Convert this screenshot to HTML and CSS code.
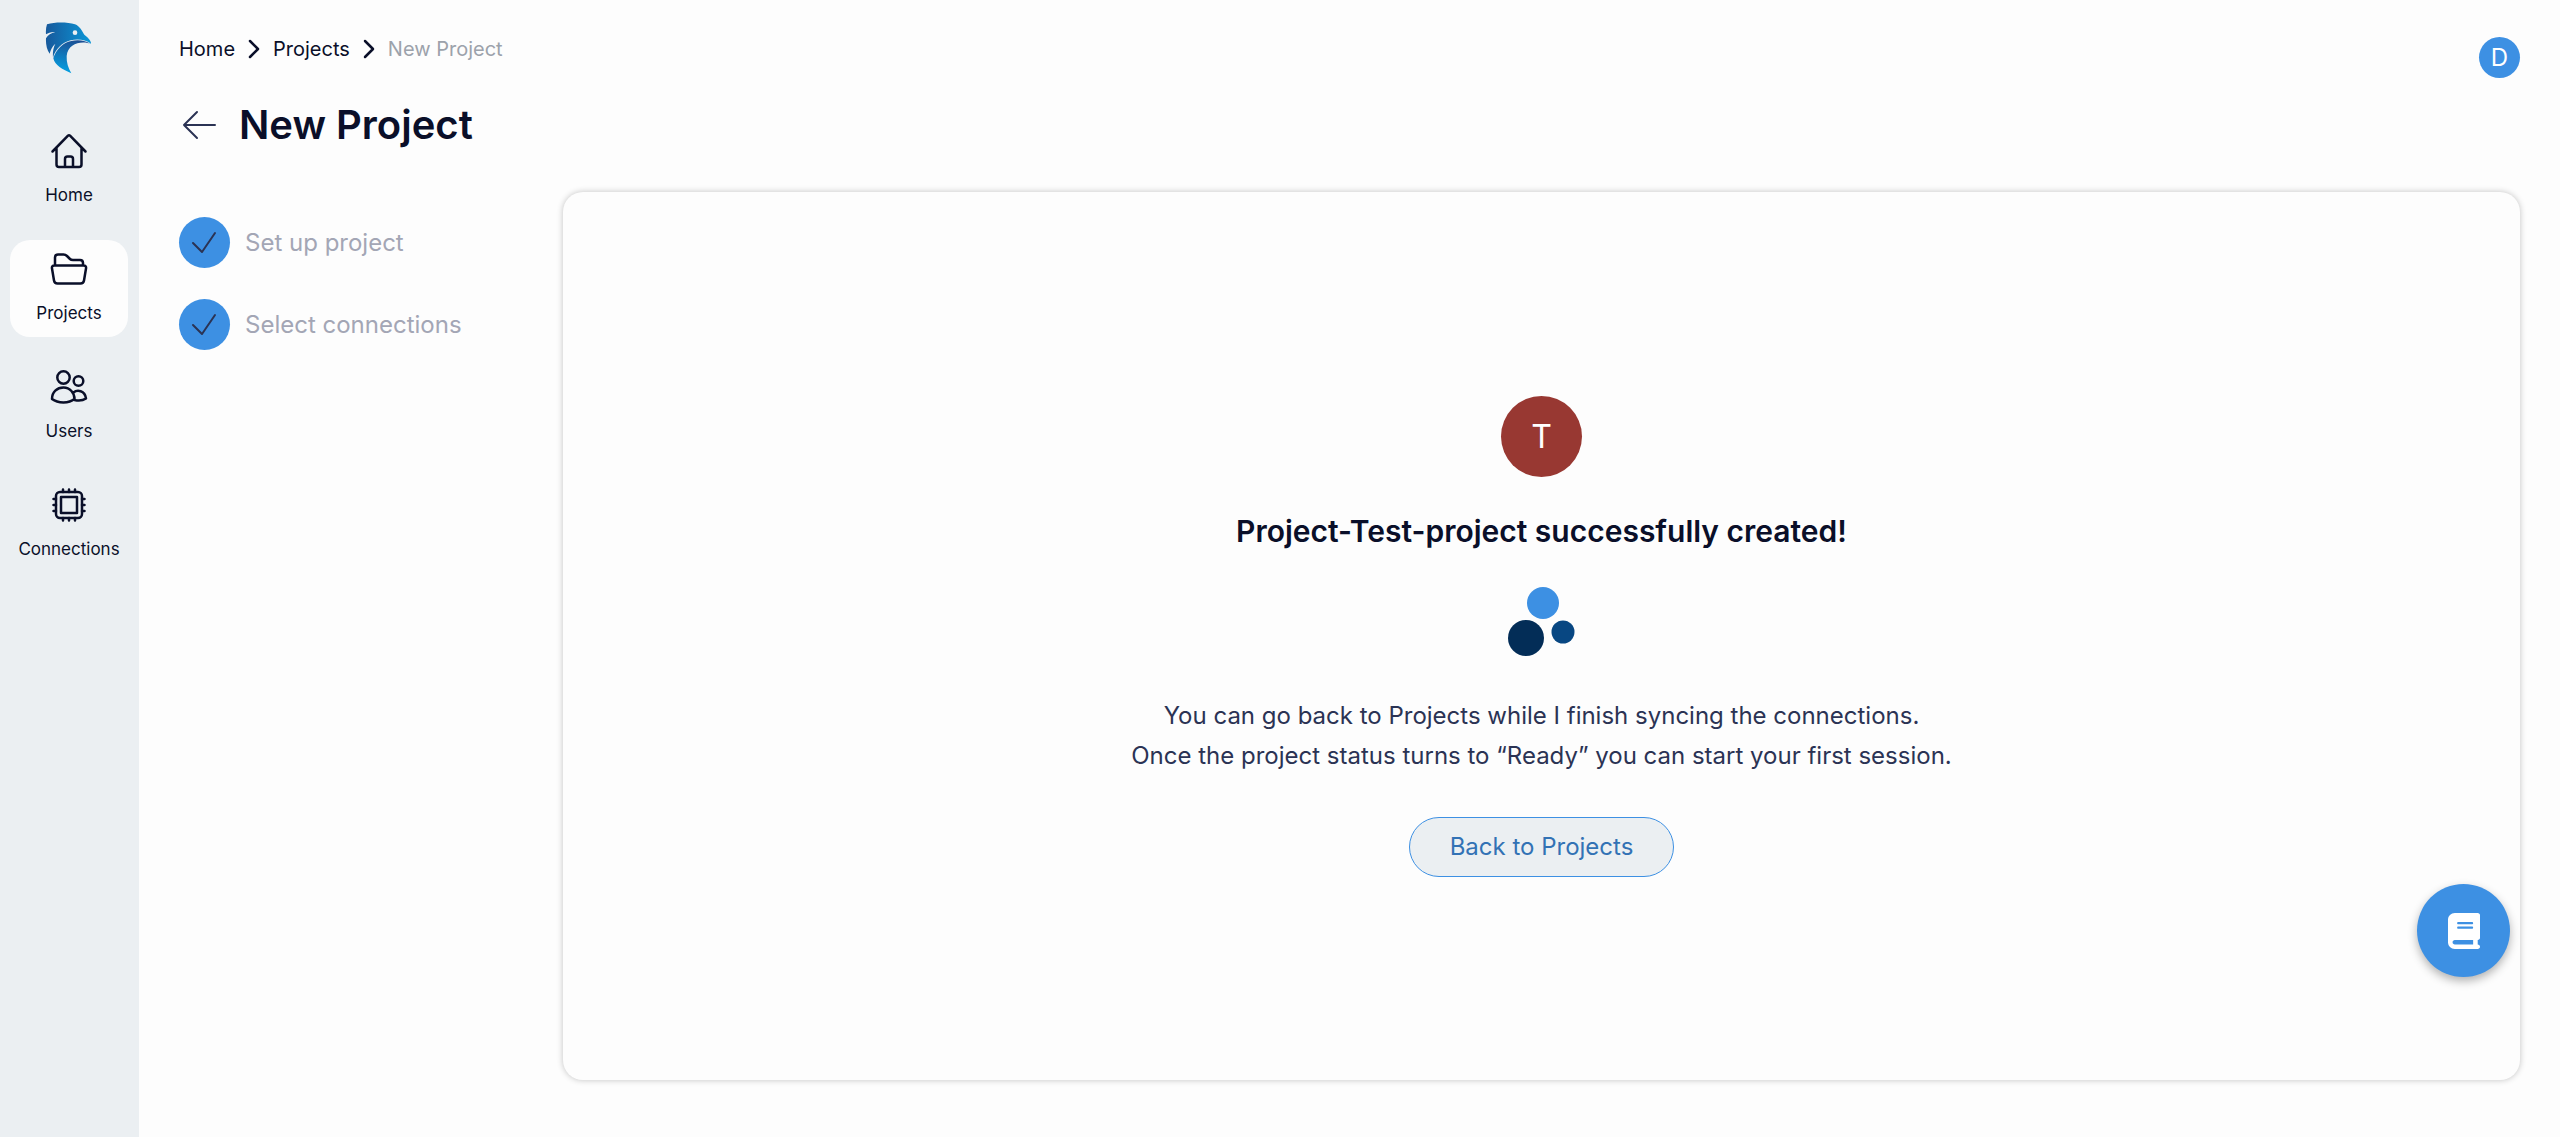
FILE: index.html
```html
<!DOCTYPE html>
<html lang="en">
<head>
    <meta charset="UTF-8">
    <meta name="viewport" content="width=device-width, initial-scale=1">
    <title>New Project</title>
    <link rel="stylesheet" href="styles.css">
</head>
<body>
<div class="app">
    <nav class="sidebar">
        <a class="logo" href="#" aria-label="Dashboard">
            <svg width="48" height="52" viewBox="48 38 144 156">
                <defs>
                    <linearGradient id="head" x1="0" y1="0" x2="1" y2="0">
                        <stop offset="0" stop-color="#17599c"/>
                        <stop offset="1" stop-color="#0a97d8"/>
                    </linearGradient>
                    <linearGradient id="neck" x1="0.6" y1="0" x2="0.4" y2="1">
                        <stop offset="0" stop-color="#1c4f94"/>
                        <stop offset="1" stop-color="#04a0e2"/>
                    </linearGradient>
                </defs>
                <path fill="url(#head)" d="M54 45C80 37 115 38 138 45C153 51 159 65 166 76C176 84 187 94 186 103C170 91 146 88 125 93C101 98 78 121 72 145C71 130 72 118 79 103C69 112 65 122 62 133C53 121 50 103 51 87C57 77 66 71 79 68C67 67 58 70 51 75C50 64 51 54 54 45Z"/>
                <path fill="url(#neck)" d="M73 147C80 121 103 99 127 95C147 90 170 93 186 104C160 93 116 101 113 140C112 160 118 176 127 192C101 181 77 167 73 147Z"/>
                <circle cx="138" cy="70" r="7" fill="#ebeff2"/>
            </svg>
        </a>
        <ul class="menu">
            <li>
                <a class="menu-item" href="#">
                    <svg class="icon" viewBox="0 0 40 40">
                        <path d="M3.5 20.5L19 4.7Q20 3.7 21 4.7L36.5 20.5M7.5 17V33.5Q7.5 36 10 36H30Q32.5 36 32.5 33.5V17M16 36V28Q16 25.500 18.5 25.5H21.5Q24 25.5 24 28V36"/>
                    </svg>
                    <span>Home</span>
                </a>
            </li>
            <li>
                <a class="menu-item active" href="#">
                    <svg class="icon" viewBox="0 0 40 40">
                        <path d="M6 16V8.5Q6 5.5 9 5.5H14.5Q16.5 5.5 18 7L21 10Q22 11 24 11H31Q34 11 34 14V16M5.5 16.5H34.5Q37.5 16.5 37 19.5L35 31.5Q34.5 34.5 31.5 34.5H8.5Q5.5 34.5 5 31.5L3 19.5Q2.5 16.5 5.5 16.5Z"/>
                    </svg>
                    <span>Projects</span>
                </a>
            </li>
            <li>
                <a class="menu-item" href="#">
                    <svg class="icon" viewBox="0 0 40 40">
                        <circle cx="14.5" cy="10.5" r="6.2"/>
                        <circle cx="29.5" cy="14" r="4.8"/>
                        <path d="M3 32C3 25 8 20.5 14.5 20.5S25.5 26 25.5 32C20 36.5 9 36.5 3 32ZM24.5 25.5C28 22.5 36 23 37 31.5C34 33.5 29 33.8 25.5 33"/>
                    </svg>
                    <span>Users</span>
                </a>
            </li>
            <li>
                <a class="menu-item" href="#">
                    <svg class="icon" viewBox="0 0 40 40">
                        <rect x="7" y="7" width="26" height="26" rx="4"/>
                        <rect x="12" y="12" width="16" height="16"/>
                        <path d="M14 7V4.5M20 7V4.5M26 7V4.5M14 33V35.5M20 33V35.5M26 33V35.5M7 14H4.5M7 20H4.5M7 26H4.5M33 14H35.5M33 20H35.5M33 26H35.5"/>
                    </svg>
                    <span>Connections</span>
                </a>
            </li>
        </ul>
    </nav>

    <main class="main">
        <header class="header">
            <div>
                <div class="breadcrumb">
                    <a href="#">Home</a>
                    <svg class="chevron" viewBox="0 0 12 20"><path d="M2 2L10 10L2 18"/></svg>
                    <a href="#">Projects</a>
                    <svg class="chevron" viewBox="0 0 12 20"><path d="M2 2L10 10L2 18"/></svg>
                    <span class="current">New Project</span>
                </div>
                <div class="title">
                    <button class="back" type="button" aria-label="Back">
                        <svg width="40" height="40" viewBox="0 0 40 40"><path d="M36 20H5M18 7L5 20L18 33"/></svg>
                    </button>
                    <h1>New Project</h1>
                </div>
            </div>
            <button class="user" type="button">D</button>
        </header>

        <div class="content">
            <ol class="steps">
                <li class="step">
                    <span class="check"><svg width="50" height="50" viewBox="0 0 50 50"><path d="M14 26L23 35L36 16"/></svg></span>
                    Set up project
                </li>
                <li class="step">
                    <span class="check"><svg width="50" height="50" viewBox="0 0 50 50"><path d="M14 26L23 35L36 16"/></svg></span>
                    Select connections
                </li>
            </ol>

            <section class="card">
                <div class="avatar">T</div>
                <h2>Project-Test-project successfully created!</h2>
                <svg class="loader" width="68" height="70" viewBox="0 0 68 70">
                    <circle cx="35" cy="16" r="16" fill="#3d90e3"/>
                    <circle cx="18" cy="51" r="18" fill="#032d57"/>
                    <circle cx="55" cy="45" r="11.5" fill="#084782"/>
                </svg>
                <p>You can go back to Projects while I finish syncing the connections.<br>Once the project status turns to “Ready” you can start your first session.</p>
                <button class="btn" type="button">Back to Projects</button>
            </section>
        </div>
    </main>

    <button class="docs" type="button" aria-label="Documentation">
        <svg width="32" height="36" viewBox="0 0 448 512" preserveAspectRatio="none">
            <path fill="#fff" d="M96 0C43 0 0 43 0 96V416c0 53 43 96 96 96H416c18 0 32-14 32-32s-14-32-32-32V384c18 0 32-14 32-32V32c0-18-14-32-32-32H96zm0 384H352v64H96c-18 0-32-14-32-32s14-32 32-32zm32-240c0-9 7-16 16-16H336c9 0 16 7 16 16s-7 16-16 16H144c-9 0-16-7-16-16zm16 48H336c9 0 16 7 16 16s-7 16-16 16H144c-9 0-16-7-16-16s7-16 16-16z"/>
        </svg>
    </button>
</div>
</body>
</html>
```
FILE: styles.css
```css
* {
    box-sizing: border-box;
}

body {
    margin: 0;
    font-family: Inter, "Liberation Sans", sans-serif;
    color: #0a0f29;
    background-color: #fdfdfd;
}

h1, h2, p, ul, ol {
    margin: 0;
    padding: 0;
}

ul, ol {
    list-style: none;
}

a {
    color: inherit;
    text-decoration: none;
}

button {
    padding: 0;
    border: none;
    font-family: inherit;
    cursor: pointer;
}

svg {
    display: block;
    fill: none;
    stroke-linecap: round;
    stroke-linejoin: round;
}

.app {
    display: flex;
    min-height: 100vh;
}

/* sidebar */
.sidebar {
    display: flex;
    flex-direction: column;
    align-items: center;
    gap: 48px;
    width: 139px;
    padding: 22px 11px 22px 10px;
    background-color: #ebeff2;
}

.menu {
    display: flex;
    flex-direction: column;
    gap: 21px;
    width: 118px;
}

.menu-item {
    display: flex;
    flex-direction: column;
    align-items: center;
    gap: 14px;
    height: 97px;
    padding-top: 9px;
    border-radius: 20px;
    font-size: 17px;
    line-height: 20px;
}

.menu-item.active {
    background-color: #fdfdfd;
}

.icon {
    width: 40px;
    height: 40px;
    stroke: #0a0f29;
    stroke-width: 2.5;
}

/* page header */
.main {
    display: flex;
    flex: 1;
    flex-direction: column;
    gap: 42px;
    padding: 37px 40px 57px;
}

.header {
    display: flex;
    justify-content: space-between;
    align-items: flex-start;
}

.breadcrumb {
    display: flex;
    align-items: center;
    gap: 13px;
    font-size: 20px;
    line-height: 24px;
}

.chevron {
    width: 12px;
    height: 20px;
    stroke: #0a0f29;
    stroke-width: 2.5;
}

.current {
    color: #9ca2ab;
}

.title {
    display: flex;
    align-items: center;
    gap: 20px;
    margin-top: 39px;
}

.title h1 {
    font-size: 40px;
    font-weight: 600;
    line-height: 50px;
}

.back {
    background: none;
}

.back svg {
    stroke: #2b3354;
    stroke-width: 2;
}

.user {
    width: 41px;
    height: 41px;
    border-radius: 50%;
    background-color: #3d90e3;
    color: #fff;
    font-size: 24px;
    line-height: 40px;
}

/* wizard */
.content {
    display: flex;
    flex: 1;
}

.steps {
    display: flex;
    flex-direction: column;
    gap: 31px;
    width: 384px;
    padding-top: 25px;
}

.step {
    display: flex;
    align-items: center;
    gap: 15px;
    color: #a3a6b5;
    font-size: 24px;
}

.check {
    width: 51px;
    height: 51px;
    border-radius: 50%;
    background-color: #3d90e3;
}

.check svg {
    stroke: #2b3354;
    stroke-width: 2;
}

.card {
    display: flex;
    flex: 1;
    flex-direction: column;
    align-items: center;
    justify-content: center;
    border-radius: 20px;
    box-shadow: 0 0 6px rgba(0, 0, 0, 0.24);
}

.avatar {
    width: 81px;
    height: 81px;
    border-radius: 50%;
    background-color: #983832;
    color: #fff;
    font-size: 32px;
    line-height: 81px;
    text-align: center;
}

.card h2 {
    margin-top: 34px;
    font-size: 30px;
    font-weight: 600;
    line-height: 40px;
}

.loader {
    margin-top: 36px;
}

.card p {
    margin-top: 39px;
    color: #2b3354;
    font-size: 24px;
    line-height: 40px;
    text-align: center;
}

.btn {
    height: 60px;
    margin-top: 41px;
    padding: 0 40px;
    border: 1px solid #3d90e3;
    border-radius: 30px;
    background-color: #ebeff2;
    color: #3272b5;
    font-size: 24px;
}

/* floating docs button */
.docs {
    position: fixed;
    right: 50px;
    bottom: 160px;
    display: flex;
    align-items: center;
    justify-content: center;
    width: 93px;
    height: 93px;
    border-radius: 50%;
    background-color: #3d90e3;
    box-shadow: 0 4px 10px rgba(0, 0, 0, 0.3);
}
```
